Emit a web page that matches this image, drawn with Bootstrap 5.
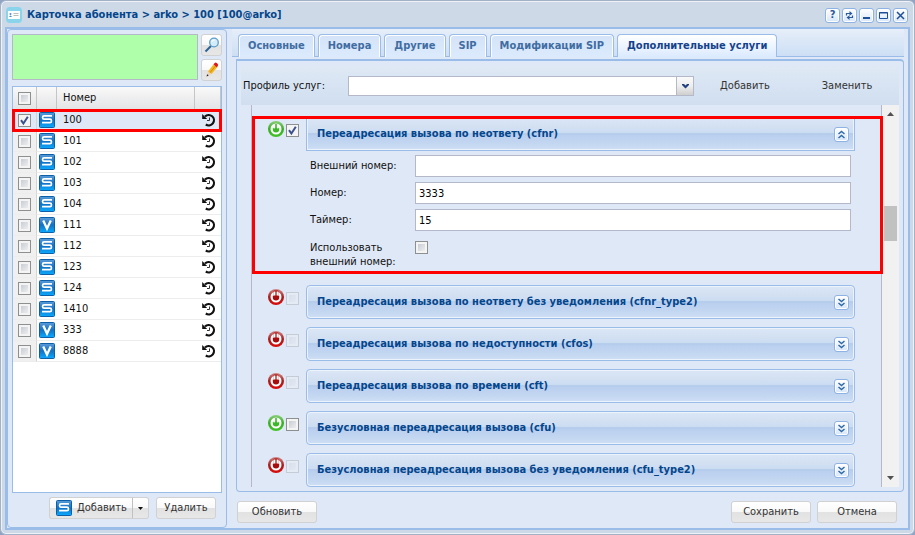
<!DOCTYPE html>
<html lang="ru">
<head>
<meta charset="utf-8">
<meta name="viewport" content="width=device-width, initial-scale=1">
<title>Карточка абонента</title>
<link href="https://cdn.jsdelivr.net/npm/bootstrap@5.3.0/dist/css/bootstrap.min.css" rel="stylesheet">
<style>
:root { --edge:#99bce8; --pane:#dfe8f6; --line:#b5b8c8; --ink:#04468c; }
body { font:11px/14px "DejaVu Sans Condensed","DejaVu Sans",sans-serif; color:#111; background:#8fa3c4; }
svg { display:block; flex:none; }
.app-window { min-height:100vh; background:#ced9e7; border:1px solid #a2b1c5; border-radius:6px; box-shadow:inset 0 0 0 1px #eef2f8; padding:2px 4px 4px; }
.title-bar { height:24px; gap:5px; padding:0 2px 0 1px; color:var(--ink); font-weight:700; }
.title-bar h1 { font:inherit; margin:0; }
.tool-set { gap:2px; }
.tool-btn { width:15px; height:15px; padding:0; border:1px solid #8db2e3; border-radius:3px; background:linear-gradient(#fff,#d6e6fa); box-shadow:inset 0 0 0 1px #fff; color:#2a5a9c; display:flex; flex:none; align-items:center; justify-content:center; }
.app-body { border:2px solid var(--edge); background:var(--pane); }
.side-pane { width:220px; border:1px solid var(--edge); border-radius:4px; padding:4px 4px 8px; }
.note-row { gap:3px; margin-bottom:5px; }
.note-stack { gap:3px; }
.note-box { height:46px; min-width:0; background:#afffaa; border:1px solid var(--line); border-radius:0; padding:2px; resize:none; font:inherit; }
.soft-btn { height:22px; font:inherit; color:#333; border:1px solid #d1d1d1; border-radius:3px; background:linear-gradient(#fff,#f9f9f9 48%,#e2e2e2 52%,#e7e7e7); padding:0 8px; }
.icon-only { width:21px; padding:0; display:flex; align-items:center; justify-content:center; }
.wide-btn { width:80px; }
.side-foot { gap:7px; margin-top:4px; padding-right:6px; }
.split-main { padding:0 6px; border-right-color:#c0c0c0; border-radius:3px 0 0 3px; display:flex; align-items:center; gap:5px; width:84px; }
.split-arrow { width:16px; padding:0; border-left:0; border-radius:0 3px 3px 0; display:flex; align-items:center; justify-content:center; }
.side-foot > .soft-btn { width:60px; padding:0; }
.grid-box { background:#fff; border:1px solid var(--edge); }
.num-grid { width:100%; table-layout:fixed; border-collapse:separate; border-spacing:0; }
.num-grid .w-tick { width:24px; } .num-grid .w-icon { width:20px; } .num-grid .w-hist { width:26px; }
.num-grid th { height:23px; padding:0; font-weight:400; border-right:1px solid #c5c5c5; border-bottom:1px solid #c5c5c5; background:linear-gradient(#f9f9f9,#e3e4e6); }
.num-grid td { height:21px; padding:0 0 0 2px; border-bottom:1px solid #ededed; }
.num-grid td:nth-child(3), .num-grid th:nth-child(3) { padding-left:6px; }
.num-grid td:first-child, .num-grid th:first-child { padding-left:5px; }
.num-grid td:first-child { background:#f0f0f0; border-right:1px solid #d4d4d4; }
.num-grid td:last-child { padding-left:7px; }
.num-grid tr.picked td { background:var(--pane); }
.num-grid tr.picked { outline:3px solid #f00; outline-offset:-2px; }
.tick { appearance:none; display:block; flex:none; width:13px; height:13px; margin:0; border:1px solid #8e8f8f; background:linear-gradient(135deg,#bfc4cc,#f6f6f6) padding-box; box-shadow:inset 0 0 0 2px #f4f4f4; }
.tick:checked { box-shadow:none; background:#f4f4f4 url("data:image/svg+xml,%3Csvg xmlns='http://www.w3.org/2000/svg' viewBox='0 0 11 11'%3E%3Cpath d='M2 5.2l2.4 3.3L8.8 1.8' fill='none' stroke='%233c4f8f' stroke-width='2'/%3E%3C/svg%3E") center/11px no-repeat; }
.tick:disabled { opacity:.3; }
.main-pane { min-width:0; padding:0 4px 5px 5px; }
.tab-strip { height:28px; gap:3px; padding:5px 0 0 6px; border-bottom:1px solid var(--edge); background:linear-gradient(#e6eef9,#cddff5); }
.tab-item { height:23px; padding:0 9px; font:inherit; font-weight:700; color:#416da3; white-space:nowrap; border:1px solid var(--edge); border-bottom:0; border-radius:4px 4px 0 0; background:linear-gradient(#d4e3f7,#dbeafc); box-shadow:inset 1px 1px #fff,inset -1px 0 #fff; }
.tab-item.current { color:#15428b; background:linear-gradient(#fff,#dbeaff); box-shadow:0 1px #dbeaff; }
.service-pane { margin:2px 0 0 4px; border:1px solid var(--edge); border-top-width:2px; border-radius:0 4px 4px 4px; padding:5px 4px 4px; }
.tool-row { height:39px; padding:0 1px 0 2px; background:linear-gradient(#dfe9f5,#d0def0); }
.tool-row label { width:105px; }
.combo { position:relative; }
.combo select { appearance:none; width:100%; height:20px; border:1px solid var(--line); border-radius:0; background:#fff; padding:0 20px 0 4px; font:inherit; display:block; }
.combo span { position:absolute; right:0; top:0; width:18px; height:20px; border:1px solid var(--line); background:linear-gradient(#fafafa,#eee 50%,#cfcfcf); display:flex; align-items:center; justify-content:center; pointer-events:none; }
.plain-btn { border:0; background:none; font:inherit; color:#333; padding:0; width:102px; }
.service-list { min-width:0; margin-left:10px; border:solid var(--line); border-width:0 1px; padding:12px 26px 0 16px; gap:8px; }
.service { gap:2px; }
.service-icon { margin-top:4px; }
.service > .tick { margin:7px 5px 0 0; }
.service-main { min-width:0; }
.service-head { height:34px; padding:0 5px 0 10px; border:1px solid var(--edge); border-radius:4px; color:var(--ink); font-weight:700; background:linear-gradient(#dbe7f7 0,#d4e1f2 25%,#cbdcf2 47%,#aec8ea 49%,#bacfef 53%,#c3d7f1 80%,#cfdff5 100%); box-shadow:inset 0 0 0 1px #edf3fb; }
.service-head h2 { font:inherit; margin:0; }
.service-head.opened { border-radius:0; }
.fields { padding:4px 4px 8px; gap:5px; }
.fields label { width:105px; flex:none; }
.fields input[type=text] { height:22px; border:1px solid var(--line); border-radius:0; padding:0 3px; font:inherit; min-width:0; background:#fff; }
.tick-field { padding-top:5px; }
.marker { position:absolute; inset:-1px -28px 3px -16px; border:3px solid #f00; pointer-events:none; }
.scroller { width:17px; padding:7px 2px; background:#f1f1f1; }
.thumb { height:35px; margin-top:90px; background:#c1c1c1; }
.main-foot { gap:6px; padding:9px 7px 0 5px; }
</style>
<script src="https://cdn.jsdelivr.net/npm/bootstrap@5.3.0/dist/js/bootstrap.bundle.min.js"></script>
</head>
<body>
<svg width="0" height="0" class="position-absolute" aria-hidden="true">
<defs>
<linearGradient id="gb" x2="0" y2="1"><stop stop-color="#5b9bd8"/><stop offset=".5" stop-color="#1272c4"/><stop offset="1" stop-color="#0aaaff"/></linearGradient>
<linearGradient id="gg" x2="0" y2="1"><stop stop-color="#8ccf7c"/><stop offset=".5" stop-color="#37ae22"/><stop offset="1" stop-color="#43c32a"/></linearGradient>
<linearGradient id="gr" x2="0" y2="1"><stop stop-color="#cf8a8a"/><stop offset=".5" stop-color="#a81c1c"/><stop offset="1" stop-color="#dd0808"/></linearGradient>
<symbol id="s" viewBox="0 0 16 16"><rect x=".5" y=".5" width="15" height="15" rx="1" fill="url(#gb)" stroke="#0d5fa8"/><path d="M13 3.800H5Q3.600 3.800 3.600 5.200v.6q0 1.400 1.400 1.400h6q1.400 0 1.400 1.400v.6q0 1.400-1.400 1.400H3" fill="none" stroke="#fff" stroke-width="1.700"/></symbol>
<symbol id="v" viewBox="0 0 16 16"><rect x=".5" y=".5" width="15" height="15" rx="1" fill="url(#gb)" stroke="#0d5fa8"/><path d="M4.200 3.500L8 11.500l3.800-8" fill="none" stroke="#fff" stroke-width="2.300"/></symbol>
<symbol id="h" viewBox="0 0 14 14"><path d="M3 3.600A5.200 5.200 0 1 1 3.800 11.500" fill="none" stroke="#111" stroke-width="2.200"/><path d="M.2 1v5h5z" fill="#111"/><path d="M7.500 4.500v3H5" fill="none" stroke="#333"/></symbol>
<symbol id="on" viewBox="0 0 16 16"><circle cx="8" cy="8" r="8" fill="url(#gg)"/><circle cx="8" cy="8" r="5.500" fill="#fff"/><path d="M4.800 6.800h6.400v1.400a3.200 3.200 0 0 1-6.400 0zM7.200 3h1.600v4H7.200z" fill="#3cb828"/><path d="M5.600 3.500h1.200v4H5.600zM9.200 3.500h1.200v4H9.200z" fill="#fff"/></symbol>
<symbol id="off" viewBox="0 0 16 16"><circle cx="8" cy="8" r="8" fill="url(#gr)"/><circle cx="8" cy="8" r="5.500" fill="#fff"/><path d="M4.800 6.800h6.400v1.400a3.200 3.200 0 0 1-6.400 0zM5.800 1.500h4.400v6H5.800z" fill="#a80c0c"/><path d="M6 2.500h1.400v4H6zM8.600 2.500H10v4H8.600z" fill="#fff"/></symbol>
<symbol id="dn" viewBox="0 0 9 9"><path d="M1.500 1l3 2.500 3-2.500M1.500 5l3 2.500 3-2.500" fill="none" stroke="#2f6aa8" stroke-width="1.500"/></symbol>
<symbol id="up" viewBox="0 0 9 9"><path d="M1.500 4l3-2.500 3 2.500M1.500 8l3-2.500 3 2.500" fill="none" stroke="#2f6aa8" stroke-width="1.500"/></symbol>
</defs>
</svg>
<div class="app-window d-flex flex-column">
<header class="title-bar d-flex align-items-center">
<svg width="16" height="16" viewBox="0 0 16 16"><rect width="16" height="16" rx="4" fill="#89d4ea"/><path d="M2 4h12v8H2z" fill="#fff"/><circle cx="4.500" cy="7" r="1" fill="#4a90d0"/><path d="M3 10q1.500-3 3 0z" fill="#4a90d0"/><path d="M7.500 6.500h5M7.500 8.500h5" stroke="#bbb"/></svg>
<h1>Карточка абонента &gt; arko &gt; 100 [100@arko]</h1>
<div class="tool-set ms-auto d-flex">
<button class="tool-btn" type="button" aria-label="Справка"><b>?</b></button>
<button class="tool-btn" type="button" aria-label="Синхронизировать"><svg width="9" height="9" viewBox="0 0 9 9"><path d="M1.500 4.500V2.500H5M7.500 4.500v2H4" fill="none" stroke="#2a5a9c" stroke-width="1.200"/><path d="M4.500 0l3 2.500-3 2.300zM4.500 4.200l-3 2.300 3 2.500z" fill="#2a5a9c"/></svg></button>
<button class="tool-btn" type="button" aria-label="Свернуть"><svg width="9" height="9"><path d="M1 7h7" stroke="#1f4f96" stroke-width="2"/></svg></button>
<button class="tool-btn" type="button" aria-label="Развернуть"><svg width="9" height="9"><path d="M.5 1.500h8v6h-8zM0 2h9" fill="none" stroke="#1f4f96"/></svg></button>
<button class="tool-btn" type="button" aria-label="Закрыть"><svg width="9" height="9"><path d="M1 1l7 7M8 1L1 8" stroke="#1f4f96" stroke-width="1.500"/></svg></button>
</div>
</header>
<div class="app-body d-flex flex-grow-1">
<aside class="side-pane flex-shrink-0 d-flex flex-column">
<div class="note-row d-flex">
<textarea class="note-box flex-grow-1" aria-label="Поиск"></textarea>
<div class="note-stack d-flex flex-column">
<button class="soft-btn icon-only" type="button" aria-label="Найти"><svg width="16" height="16" viewBox="0 0 16 16"><path d="M7 9L1.500 14.500" stroke="#2a6296" stroke-width="2"/><circle cx="10" cy="5.500" r="4.300" fill="#d4ecfb" stroke="#5b9cc8" stroke-width="1.300"/><path d="M7.800 5a2.500 2.500 0 0 1 3-2" stroke="#fff" fill="none"/></svg></button>
<button class="soft-btn icon-only" type="button" aria-label="Изменить"><svg width="16" height="16" viewBox="0 0 16 16"><path d="M4 9.500l5.500-7L13 5.500 7.500 12z" fill="#f5b51e"/><path d="M5.800 10.800l5.700-6.800" stroke="#d98a10"/><path d="M9.500 2.500L10.700 1q1-.8 2 0l1 .9q.9 1 0 2L13 5.500z" fill="#e01818"/><path d="M4 9.500L2.500 14.500 7.500 12z" fill="#ecd3b0"/><path d="M2.500 14.500l.7-2.200 1.500 1.200z" fill="#222"/></svg></button>
</div>
</div>
<div class="grid-box flex-grow-1">
<table class="num-grid">
<colgroup><col class="w-tick"><col class="w-icon"><col><col class="w-hist"></colgroup>
<thead><tr><th><input class="tick" type="checkbox" aria-label="Выбрать все"></th><th></th><th>Номер</th><th></th></tr></thead>
<tbody>
<tr class="picked"><td><input class="tick" type="checkbox" aria-label="100" checked></td><td><svg width="16" height="16"><use href="#s"/></svg></td><td>100</td><td><svg width="14" height="14"><use href="#h"/></svg></td></tr>
<tr><td><input class="tick" type="checkbox" aria-label="101"></td><td><svg width="16" height="16"><use href="#s"/></svg></td><td>101</td><td><svg width="14" height="14"><use href="#h"/></svg></td></tr>
<tr><td><input class="tick" type="checkbox" aria-label="102"></td><td><svg width="16" height="16"><use href="#s"/></svg></td><td>102</td><td><svg width="14" height="14"><use href="#h"/></svg></td></tr>
<tr><td><input class="tick" type="checkbox" aria-label="103"></td><td><svg width="16" height="16"><use href="#s"/></svg></td><td>103</td><td><svg width="14" height="14"><use href="#h"/></svg></td></tr>
<tr><td><input class="tick" type="checkbox" aria-label="104"></td><td><svg width="16" height="16"><use href="#s"/></svg></td><td>104</td><td><svg width="14" height="14"><use href="#h"/></svg></td></tr>
<tr><td><input class="tick" type="checkbox" aria-label="111"></td><td><svg width="16" height="16"><use href="#v"/></svg></td><td>111</td><td><svg width="14" height="14"><use href="#h"/></svg></td></tr>
<tr><td><input class="tick" type="checkbox" aria-label="112"></td><td><svg width="16" height="16"><use href="#s"/></svg></td><td>112</td><td><svg width="14" height="14"><use href="#h"/></svg></td></tr>
<tr><td><input class="tick" type="checkbox" aria-label="123"></td><td><svg width="16" height="16"><use href="#s"/></svg></td><td>123</td><td><svg width="14" height="14"><use href="#h"/></svg></td></tr>
<tr><td><input class="tick" type="checkbox" aria-label="124"></td><td><svg width="16" height="16"><use href="#s"/></svg></td><td>124</td><td><svg width="14" height="14"><use href="#h"/></svg></td></tr>
<tr><td><input class="tick" type="checkbox" aria-label="1410"></td><td><svg width="16" height="16"><use href="#s"/></svg></td><td>1410</td><td><svg width="14" height="14"><use href="#h"/></svg></td></tr>
<tr><td><input class="tick" type="checkbox" aria-label="333"></td><td><svg width="16" height="16"><use href="#v"/></svg></td><td>333</td><td><svg width="14" height="14"><use href="#h"/></svg></td></tr>
<tr><td><input class="tick" type="checkbox" aria-label="8888"></td><td><svg width="16" height="16"><use href="#v"/></svg></td><td>8888</td><td><svg width="14" height="14"><use href="#h"/></svg></td></tr>
</tbody>
</table>
</div>
<div class="side-foot d-flex justify-content-end">
<div class="d-flex">
<button class="soft-btn split-main" type="button"><svg width="16" height="16"><use href="#s"/></svg>Добавить</button>
<button class="soft-btn split-arrow" type="button" aria-label="Варианты добавления"><svg width="5" height="3"><path d="M0 0h5L2.500 3z" fill="#111"/></svg></button>
</div>
<button class="soft-btn" type="button">Удалить</button>
</div>
</aside>
<main class="main-pane flex-grow-1 d-flex flex-column">
<div class="tab-strip d-flex" role="tablist">
<button class="tab-item" type="button" role="tab">Основные</button>
<button class="tab-item" type="button" role="tab">Номера</button>
<button class="tab-item" type="button" role="tab">Другие</button>
<button class="tab-item" type="button" role="tab">SIP</button>
<button class="tab-item" type="button" role="tab">Модификации SIP</button>
<button class="tab-item current" type="button" role="tab" aria-selected="true">Дополнительные услуги</button>
</div>
<section class="service-pane flex-grow-1 d-flex flex-column">
<div class="tool-row d-flex align-items-center">
<label for="profile">Профиль услуг:</label>
<div class="combo flex-grow-1"><select id="profile"><option></option></select><span><svg width="9" height="6"><path d="M1 1h2l1.500 1.500L6 1h2v1L4.500 5.500 1 2z" fill="#1f3f7f"/></svg></span></div>
<button class="plain-btn" type="button">Добавить</button>
<button class="plain-btn" type="button">Заменить</button>
</div>
<div class="d-flex flex-grow-1">
<div class="service-list flex-grow-1 d-flex flex-column">
<div class="service d-flex position-relative">
<svg class="service-icon" width="16" height="16"><use href="#on"/></svg>
<input class="tick" type="checkbox" checked aria-label="cfnr">
<div class="service-main flex-grow-1">
<div class="service-head opened d-flex align-items-center justify-content-between"><h2>Переадресация вызова по неответу (cfnr)</h2><button class="tool-btn" type="button" aria-label="Свернуть раздел"><svg width="9" height="9"><use href="#up"/></svg></button></div>
<div class="fields d-flex flex-column">
<div class="d-flex align-items-center"><label for="ext">Внешний номер:</label><input class="flex-grow-1" type="text" id="ext"></div>
<div class="d-flex align-items-center"><label for="num">Номер:</label><input class="flex-grow-1" type="text" id="num" value="3333"></div>
<div class="d-flex align-items-center"><label for="timer">Таймер:</label><input class="flex-grow-1" type="text" id="timer" value="15"></div>
<div class="tick-field d-flex"><label for="useext">Использовать<br>внешний номер:</label><input class="tick" type="checkbox" id="useext"></div>
</div>
</div>
<div class="marker"></div>
</div>
<div class="service d-flex"><svg class="service-icon" width="16" height="16"><use href="#off"/></svg><input class="tick" type="checkbox" disabled aria-label="cfnr_type2"><div class="service-main service-head flex-grow-1 d-flex align-items-center justify-content-between"><h2>Переадресация вызова по неответу без уведомления (cfnr_type2)</h2><button class="tool-btn" type="button" aria-label="Развернуть раздел"><svg width="9" height="9"><use href="#dn"/></svg></button></div></div>
<div class="service d-flex"><svg class="service-icon" width="16" height="16"><use href="#off"/></svg><input class="tick" type="checkbox" disabled aria-label="cfos"><div class="service-main service-head flex-grow-1 d-flex align-items-center justify-content-between"><h2>Переадресация вызова по недоступности (cfos)</h2><button class="tool-btn" type="button" aria-label="Развернуть раздел"><svg width="9" height="9"><use href="#dn"/></svg></button></div></div>
<div class="service d-flex"><svg class="service-icon" width="16" height="16"><use href="#off"/></svg><input class="tick" type="checkbox" disabled aria-label="cft"><div class="service-main service-head flex-grow-1 d-flex align-items-center justify-content-between"><h2>Переадресация вызова по времени (cft)</h2><button class="tool-btn" type="button" aria-label="Развернуть раздел"><svg width="9" height="9"><use href="#dn"/></svg></button></div></div>
<div class="service d-flex"><svg class="service-icon" width="16" height="16"><use href="#on"/></svg><input class="tick" type="checkbox" aria-label="cfu"><div class="service-main service-head flex-grow-1 d-flex align-items-center justify-content-between"><h2>Безусловная переадресация вызова (cfu)</h2><button class="tool-btn" type="button" aria-label="Развернуть раздел"><svg width="9" height="9"><use href="#dn"/></svg></button></div></div>
<div class="service d-flex"><svg class="service-icon" width="16" height="16"><use href="#off"/></svg><input class="tick" type="checkbox" disabled aria-label="cfu_type2"><div class="service-main service-head flex-grow-1 d-flex align-items-center justify-content-between"><h2>Безусловная переадресация вызова без уведомления (cfu_type2)</h2><button class="tool-btn" type="button" aria-label="Развернуть раздел"><svg width="9" height="9"><use href="#dn"/></svg></button></div></div>
</div>
<div class="scroller d-flex flex-column" aria-hidden="true">
<svg class="mx-auto" width="7" height="4"><path d="M0 4h7L3.500 0z" fill="#505050"/></svg>
<div class="thumb"></div>
<svg class="mx-auto mt-auto" width="7" height="4"><path d="M0 0h7L3.500 4z" fill="#505050"/></svg>
</div>
</div>
</section>
<div class="main-foot d-flex">
<button class="soft-btn wide-btn me-auto" type="button">Обновить</button>
<button class="soft-btn wide-btn" type="button">Сохранить</button>
<button class="soft-btn wide-btn" type="button">Отмена</button>
</div>
</main>
</div>
</div>
</body>
</html>
